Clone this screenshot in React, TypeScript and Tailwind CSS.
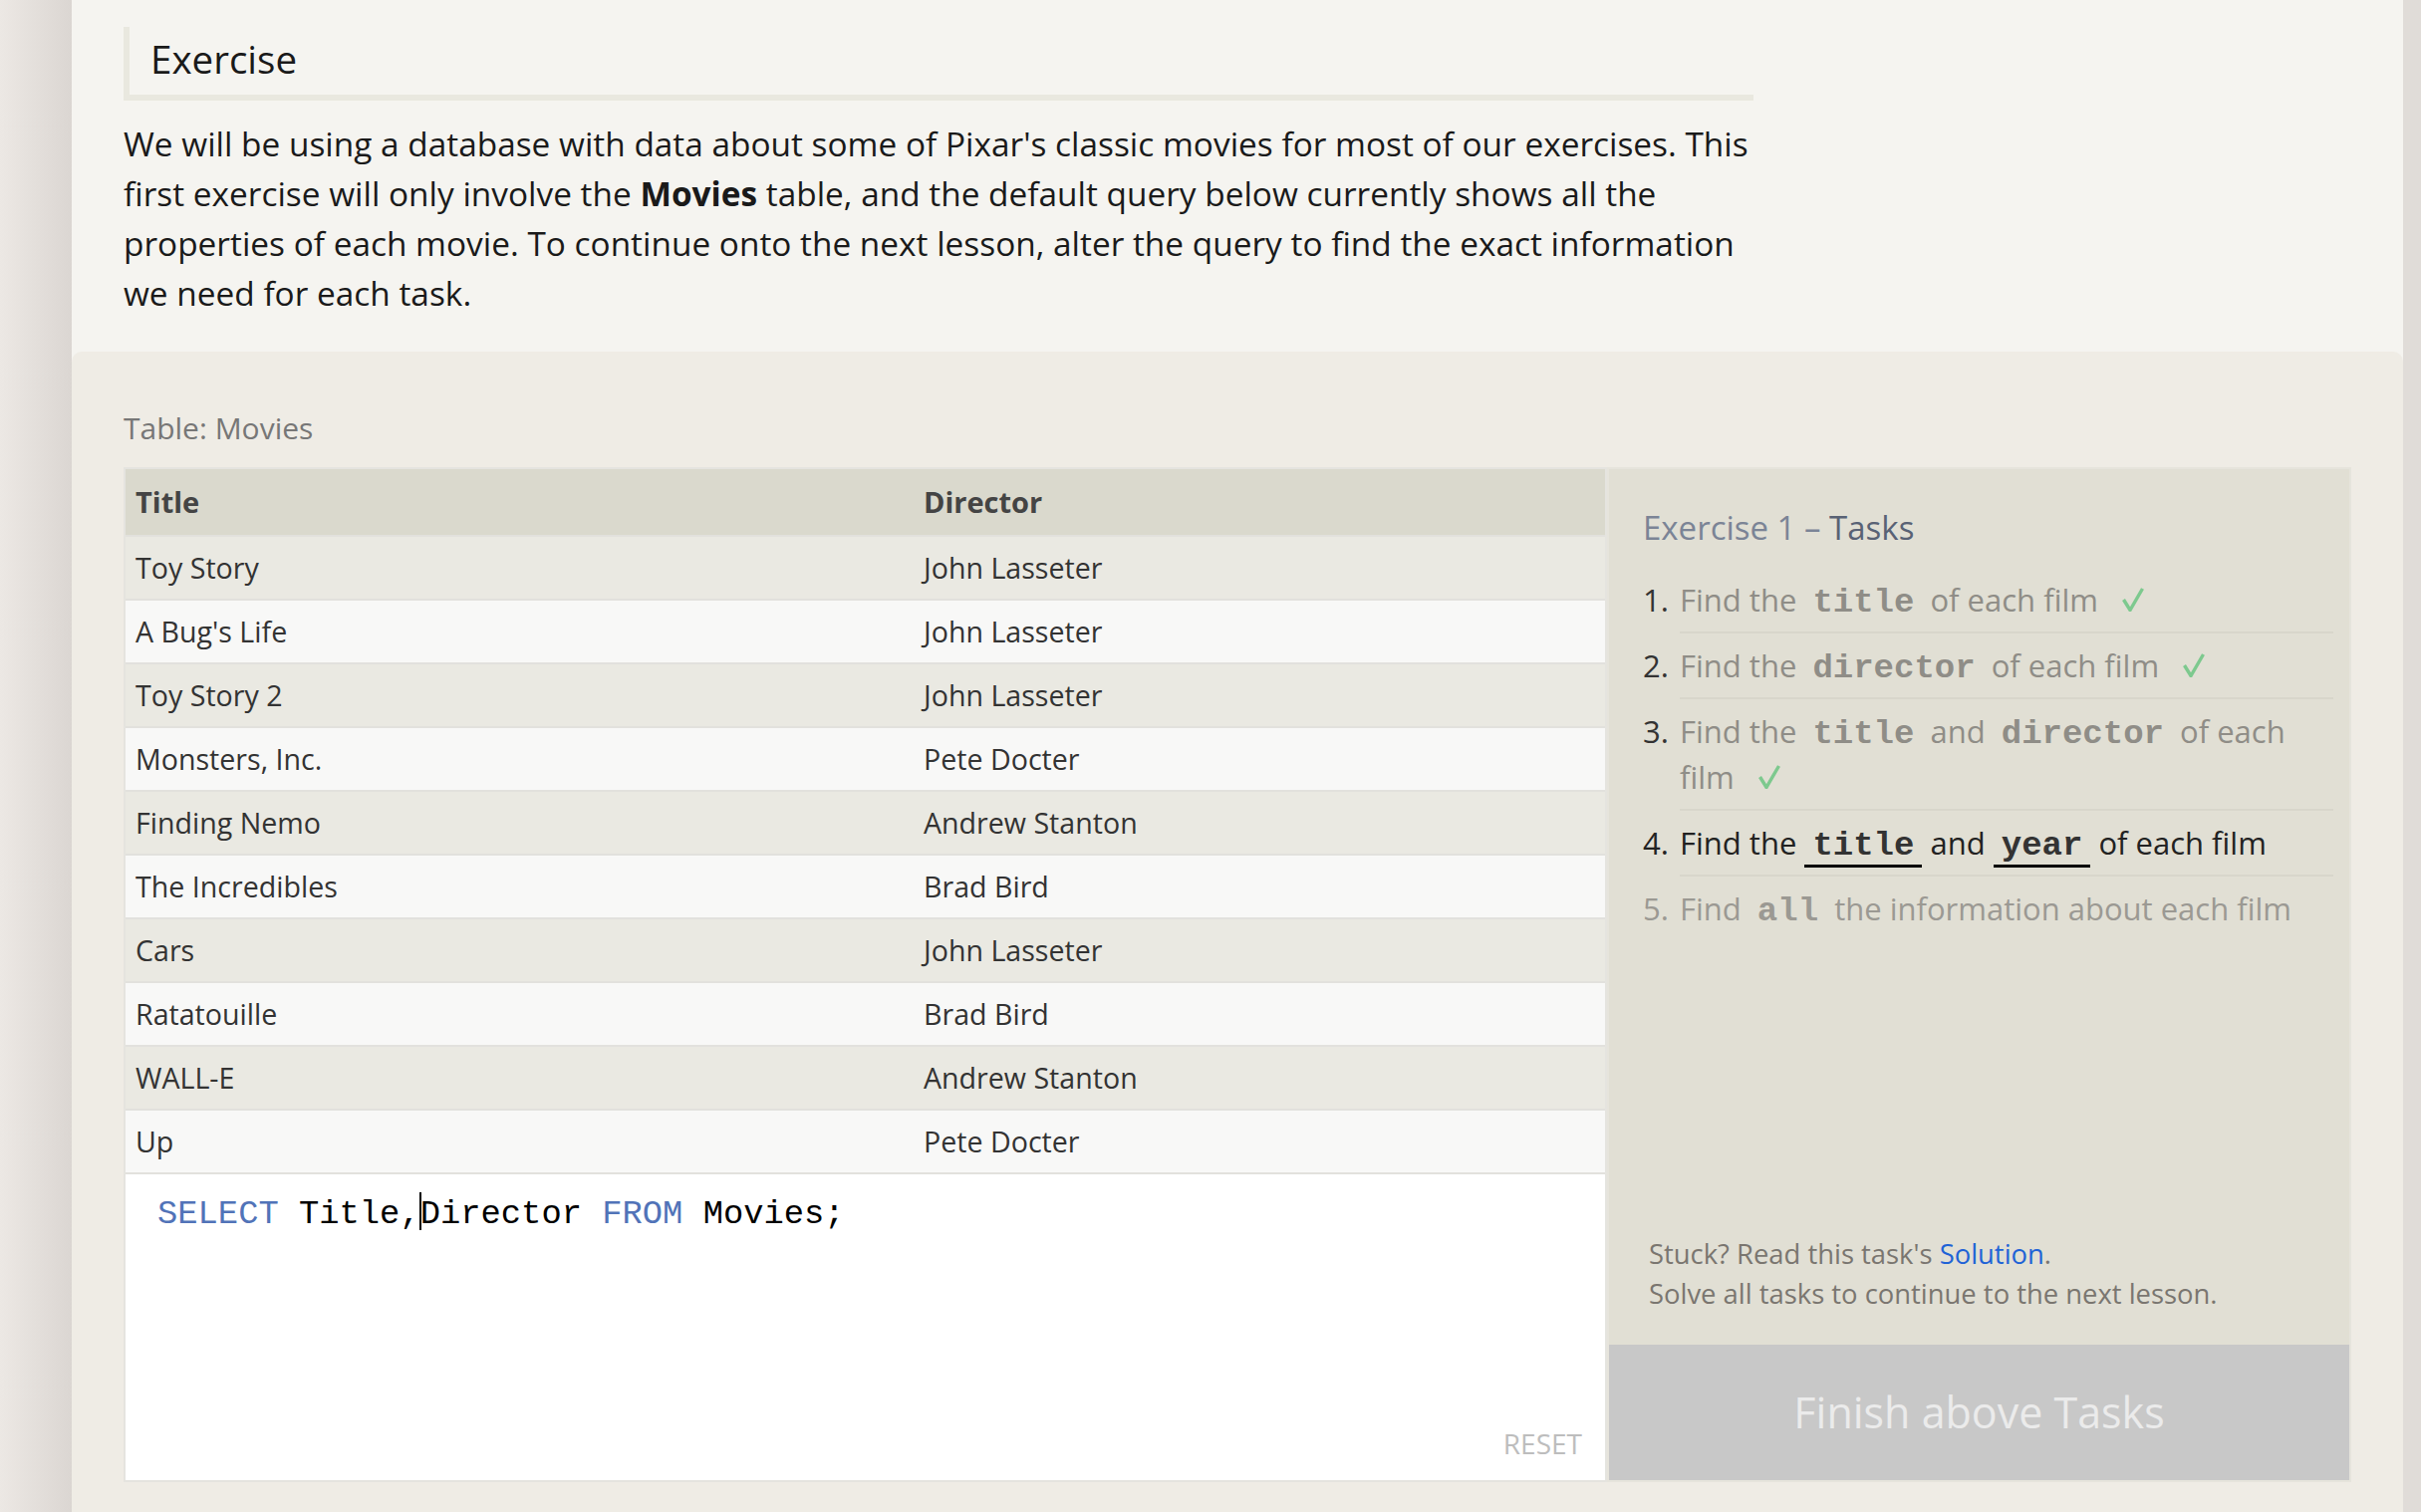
import React from "react";

const rows: [string, string][] = [
  ["Toy Story", "John Lasseter"],
  ["A Bug's Life", "John Lasseter"],
  ["Toy Story 2", "John Lasseter"],
  ["Monsters, Inc.", "Pete Docter"],
  ["Finding Nemo", "Andrew Stanton"],
  ["The Incredibles", "Brad Bird"],
  ["Cars", "John Lasseter"],
  ["Ratatouille", "Brad Bird"],
  ["WALL-E", "Andrew Stanton"],
  ["Up", "Pete Docter"],
];

const Code = ({ children, cls = "" }: { children: React.ReactNode; cls?: string }) => (
  <span className={`font-['Liberation_Mono',monospace] font-bold text-[34px] leading-[0px] px-[8px] ${cls}`}>{children}</span>
);

const Check = () => (
  <svg className="inline-block align-baseline ml-[24px]" width="22" height="24" viewBox="0 0 22 24">
    <path d="M1.5 12 L8 22.5 L20.5 1" fill="none" stroke="#7dc98e" strokeWidth="3.4" strokeLinejoin="miter" />
  </svg>
);

export default function App() {
  return (
    <div className="flex w-[2430px] h-[1518px] overflow-hidden font-['Open_Sans',sans-serif] text-[#1a1a1a]">
      <div className="w-[72px] shrink-0 bg-gradient-to-r from-[#ece8e4] to-[#dbd6d2]" />
      <div className="flex flex-col w-[2340px] shrink-0 bg-[#f5f4f0]">
        <div className="h-[353px] shrink-0 pl-[52px] pt-[27px]">
          <h2 className="w-[1636px] h-[74px] border-l-[6px] border-b-[6px] border-[#e9e8df] pl-[21px] pb-[2px] flex items-center text-[38.5px]">
            Exercise
          </h2>
          <p className="mt-[18px] w-[1640px] text-[33.4px] leading-[50px] whitespace-nowrap">
            We will be using a database with data about some of Pixar's classic movies for most of our exercises. This
            <br />
            first exercise will only involve the <b>Movies</b> table, and the default query below currently shows all the
            <br />
            properties of each movie. To continue onto the next lesson, alter the query to find the exact information
            <br />
            we need for each task.
          </p>
        </div>
        <div className="flex-1 bg-[#efece5] rounded-t-[10px] pl-[52px] pt-[57px]">
          <div className="text-[30px] leading-[40px] text-[#777]">Table: Movies</div>
          <div className="mt-[19px] flex w-[2236px] h-[1019px]">
            <div className="w-[1489px] shrink-0 border-2 border-[#e5e4df] flex flex-col">
              <div className="flex h-[68px] shrink-0 bg-[#dad9cd] border-b-2 border-[#e2e1dc] items-center font-bold text-[29px] text-[#444]">
                <div className="w-[791px] px-[10px]">Title</div>
                <div className="px-[10px]">Director</div>
              </div>
              {rows.map(([t, d], i) => (
                <div
                  key={t}
                  className={`flex h-[64px] shrink-0 border-b-2 border-[#e2e1dd] items-center text-[28.6px] text-[#333] ${
                    i % 2 === 0 ? "bg-[#eae9e2]" : "bg-[#f8f8f7]"
                  }`}
                >
                  <div className="w-[791px] px-[10px]">{t}</div>
                  <div className="px-[10px]">{d}</div>
                </div>
              ))}
              <div className="flex-1 bg-white flex flex-col pl-[32px] pr-[23px] pt-[20px] pb-[22px]">
                <div className="font-['Liberation_Mono',monospace] text-[33.8px] leading-[40px] text-black whitespace-pre">
                  <span className="text-[#5173b8]">SELECT</span> Title,
                  <span className="relative">
                    <span className="absolute left-[-1px] top-[-3px] w-[2px] h-[38px] bg-black" />D
                  </span>
                  irector <span className="text-[#5173b8]">FROM</span> Movies;
                </div>
                <div className="mt-auto self-end text-[28px] leading-[30px] text-[#bdbdbd]">RESET</div>
              </div>
            </div>
            <div className="w-[747px] shrink-0 border-2 border-[#e6e4dc] bg-[#e1dfd4] flex flex-col">
              <div className="pl-[34px] pr-[16px] pt-[39px]">
                <div className="text-[33px] leading-[40px] text-[#7b8496]">
                  Exercise 1 – <span className="text-[#596275]">Tasks</span>
                </div>
                <ol className="mt-[20px] text-[31px] text-[#8f8d87]">
                  <li className="flex">
                    <span className="w-[37px] shrink-0 pt-[9px] leading-[46px] text-[#333]">1.</span>
                    <div className="flex-1 py-[9px] leading-[46px] border-b-2 border-[#d8d6cb] whitespace-nowrap">
                      Find the <Code>title</Code> of each film
                      <Check />
                    </div>
                  </li>
                  <li className="flex">
                    <span className="w-[37px] shrink-0 pt-[9px] leading-[46px] text-[#333]">2.</span>
                    <div className="flex-1 py-[9px] leading-[46px] border-b-2 border-[#d8d6cb] whitespace-nowrap">
                      Find the <Code>director</Code> of each film
                      <Check />
                    </div>
                  </li>
                  <li className="flex">
                    <span className="w-[37px] shrink-0 pt-[9px] leading-[46px] text-[#333]">3.</span>
                    <div className="flex-1 py-[9px] leading-[46px] border-b-2 border-[#d8d6cb] whitespace-nowrap">
                      Find the <Code>title</Code> and <Code>director</Code> of each
                      <br />
                      film
                      <Check />
                    </div>
                  </li>
                  <li className="flex text-[#222]">
                    <span className="w-[37px] shrink-0 pt-[9px] leading-[46px]">4.</span>
                    <div className="flex-1 py-[9px] leading-[46px] border-b-2 border-[#d8d6cb] whitespace-nowrap">
                      Find the <Code cls="border-b-[3px] border-black text-[#333]">title</Code> and{" "}
                      <Code cls="border-b-[3px] border-black text-[#333]">year</Code> of each film
                    </div>
                  </li>
                  <li className="flex text-[#9b9993]">
                    <span className="w-[37px] shrink-0 pt-[9px] leading-[46px]">5.</span>
                    <div className="flex-1 py-[9px] leading-[46px] whitespace-nowrap">
                      Find <Code>all</Code> the information about each film
                    </div>
                  </li>
                </ol>
              </div>
              <div className="mt-auto pl-[40px] text-[27.4px] leading-[40px] text-[#7a7670]">
                <div>
                  Stuck? Read this task's <span className="text-[#1f63d6]">Solution</span>.
                </div>
                <div>Solve all tasks to continue to the next lesson.</div>
              </div>
              <div className="mt-[31px] h-[136px] shrink-0 bg-[#c8c8c8] flex items-center justify-center text-[43px] text-[#ebebeb]">
                Finish above Tasks
              </div>
            </div>
          </div>
        </div>
      </div>
      <div className="w-[18px] shrink-0 bg-[#e0dcd8]" />
    </div>
  );
}
